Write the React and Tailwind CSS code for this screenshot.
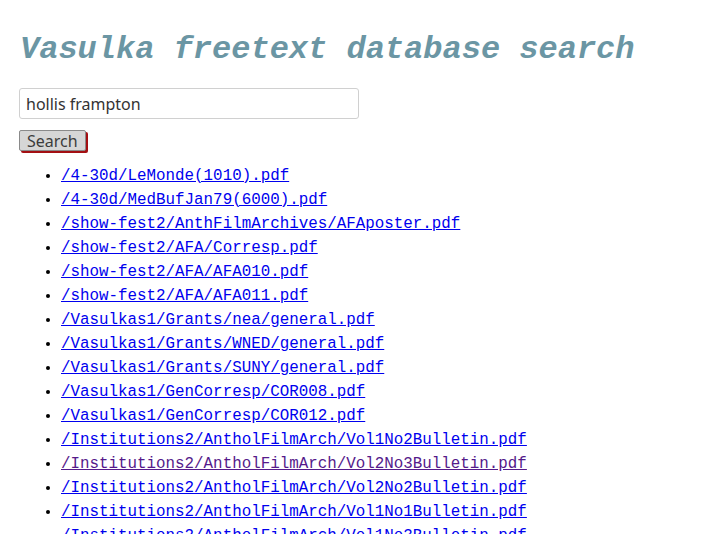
import React, { useState } from 'react';

const files = [
  { path: '/4-30d/LeMonde(1010).pdf' },
  { path: '/4-30d/MedBufJan79(6000).pdf' },
  { path: '/show-fest2/AnthFilmArchives/AFAposter.pdf' },
  { path: '/show-fest2/AFA/Corresp.pdf' },
  { path: '/show-fest2/AFA/AFA010.pdf' },
  { path: '/show-fest2/AFA/AFA011.pdf' },
  { path: '/Vasulkas1/Grants/nea/general.pdf' },
  { path: '/Vasulkas1/Grants/WNED/general.pdf' },
  { path: '/Vasulkas1/Grants/SUNY/general.pdf' },
  { path: '/Vasulkas1/GenCorresp/COR008.pdf' },
  { path: '/Vasulkas1/GenCorresp/COR012.pdf' },
  { path: '/Institutions2/AntholFilmArch/Vol1No2Bulletin.pdf' },
  { path: '/Institutions2/AntholFilmArch/Vol2No3Bulletin.pdf', visited: true },
  { path: '/Institutions2/AntholFilmArch/Vol2No2Bulletin.pdf' },
  { path: '/Institutions2/AntholFilmArch/Vol1No1Bulletin.pdf' },
  { path: '/Institutions2/AntholFilmArch/Vol1No3Bulletin.pdf' },
  { path: '/Institutions2/AntholFilmArch/Vol3No1Bulletin.pdf' },
];

const App = () => {
  const [query, setQuery] = useState('hollis frampton');

  return (
    <div className="min-h-screen bg-white px-5 pt-[32px]">
      {/* Title */}
      <h1 className="font-['Liberation_Mono',monospace] text-[32px] leading-[36px] font-bold italic text-[#6b96a4]">
        Vasulka freetext database search
      </h1>

      {/* Search form */}
      <form className="mt-[20px]" onSubmit={(e) => e.preventDefault()}>
        <input
          type="text"
          value={query}
          onChange={(e) => setQuery(e.target.value)}
          className="block w-[340px] h-[31px] -ml-px px-[6px] border border-[#d0d0d0] rounded-[3px] bg-white font-['Noto_Sans',sans-serif] text-[16px] text-[#333] focus:outline-none"
        />
        <button
          type="submit"
          className="mt-[11px] -ml-px h-[21px] px-[7px] border border-[#8a8a8a] rounded-[2px] bg-[#d6d6d6] font-['Noto_Sans',sans-serif] text-[16px] leading-[18px] text-[#3c3c3c] shadow-[2px_2px_0_#a30f12]"
        >
          Search
        </button>
      </form>

      {/* Results */}
      <ul className="mt-[11px] pl-[41px] list-disc font-['Liberation_Mono',monospace] text-[15.85px] leading-[24px]">
        {files.map((f) => (
          <li key={f.path}>
            <a
              href="#"
              className={f.visited ? 'text-[#551a8b] underline' : 'text-[#0000ee] underline'}
            >
              {f.path}
            </a>
          </li>
        ))}
      </ul>
    </div>
  );
};

export default App;
